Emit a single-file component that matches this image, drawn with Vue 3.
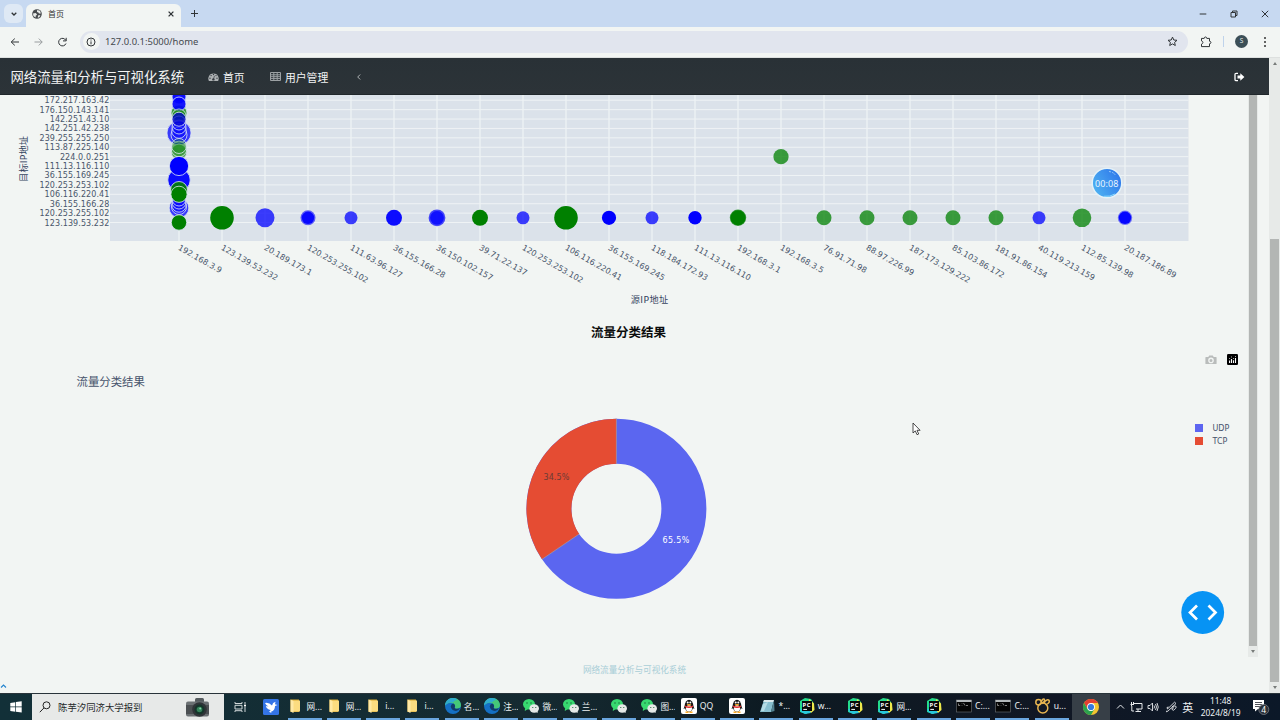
<script setup>
const yTicks = ['172.217.163.42', '176.150.143.141', '142.251.43.10', '142.251.42.238', '239.255.255.250', '113.87.225.140', '224.0.0.251', '111.13.116.110', '36.155.169.245', '120.253.253.102', '106.116.220.41', '36.155.166.28', '120.253.255.102', '123.139.53.232']
const xTicks = ['192.168.3.9', '123.139.53.232', '20.189.173.1', '120.253.255.102', '111.63.96.127', '36.155.166.28', '36.150.102.157', '39.71.22.137', '120.253.253.102', '106.116.220.41', '36.155.169.245', '118.184.172.93', '111.13.116.110', '192.168.3.1', '192.168.3.5', '76.91.71.98', '88.97.226.99', '187.173.129.222', '85.103.86.172', '181.91.86.154', '40.119.213.159', '112.85.139.98', '20.187.186.89']
const tx = (i) => 179 + i * 43
const ty = (i) => 5.2 + i * 9.41
// advance width of an address in an 8px tick label
const len = (s) => [...s].reduce((n, c) => n + (c === '.' ? 2.9 : 5.09), 0)
const B = 'blue'
const G = 'green'
// bubbles of the first source: y, radius, colour, opacity
const stack = [
  [18, 8, G, 0.72], [-1, 7.5, B, 0.75], [2, 7, B, 0.8], [9, 7, B, 0.9], [21, 7, G, 0.5],
  [38, 12, B, 0.75], [40, 8, B, 0.3], [36, 7.3, B, 0.4], [32, 7, B, 0.3], [28, 7, B, 0.3], [24.2, 7, '#0000d0', 0.75],
  [57, 7.8, G, 0.6], [54, 7.8, G, 0.3], [51, 7.5, G, 0.3],
  [85, 11.2, B, 0.95], [71, 9.6, B, 1], [113, 9.8, B, 0.75],
  [112, 7.5, B, 0.3], [110, 7.2, B, 0.3], [107, 7, B, 0.3], [104, 7, B, 0.3], [95, 8.5, G, 0.9], [99.3, 8.1, G, 1], [127.5, 7.7, G, 1]
]
// bubbles of the lower row: source index, radius, colour, opacity
const row = [
  [1, 11.8, G, 1], [2, 9.5, B, 0.75], [3, 7.5, B, 0.6], [3, 6.2, B, 0.9], [4, 6.5, B, 0.75], [5, 8, B, 0.95],
  [6, 8.4, B, 0.7], [6, 6.9, B, 0.75], [7, 8, G, 1], [8, 6.5, B, 0.75], [9, 11.8, G, 1], [10, 7.1, B, 1],
  [11, 6.5, B, 0.75], [12, 6.7, B, 1], [13, 8.2, G, 0.75], [13, 7.5, G, 1], [15, 7.5, G, 0.75], [16, 7.5, G, 0.75],
  [17, 7.5, G, 0.75], [18, 7.5, G, 0.75], [19, 7.5, G, 0.75], [20, 6.5, B, 0.75], [21, 9.3, G, 0.75], [22, 7.2, B, 0.5], [22, 6.2, B, 0.95]
]
const tasks = [
  ['folder', '网...'], ['folder', '网...'], ['folder', 'i...'], ['folder', 'i...'], ['edge', '名...'], ['edge', '注...'],
  ['wechat', '微...'], ['wechat', '兰...'], ['wechat', ''], ['wechat', '图...'], ['qq', 'QQ'], ['qq', ''], ['note', '*...'],
  ['pc', 'w...'], ['pc', ''], ['pc', '网...'], ['pc', ''], ['cmd', 'C:...'], ['cmd', 'C:...'], ['navicat', 'u...']
]
</script>

<template>
  <div class="screen">
    <header class="tabs">
      <div class="drop"><svg width="8" height="8" viewBox="0 0 8 8"><path d="M1.7 2.8 4 5l2.3-2.2" class="ink bold" /></svg></div>
      <div class="tab">
        <svg width="10" height="10" viewBox="0 0 10 10"><circle cx="5" cy="5" r="4.8" fill="#474a4d" /><path d="M1 4.4 3.6 3.9 5 5.2 4.6 6.3 3.8 6.5 3.6 8.6 1.4 7ZM5.1 1 8 1.8 8.9 4.5 7 4.6 6.4 3.5 5 3.1ZM6 6.5 8.4 6 7.4 8.2 5.8 8.8Z" fill="#e9ecea" /></svg>
        <span>首页</span>
        <svg class="close" width="8" height="8" viewBox="0 0 8 8"><path d="M1.6 1.6 6.4 6.4M6.4 1.6 1.6 6.4" class="ink bold" /></svg>
      </div>
      <svg class="plus" width="9" height="9" viewBox="0 0 9 9"><path d="M4.5 1v7M1 4.5h7" class="ink" /></svg>
      <div class="win">
        <svg width="8" height="8" viewBox="0 0 8 8"><path d="M.7 4h6.6" class="ink" /></svg>
        <svg width="8" height="8" viewBox="0 0 8 8"><path d="M1 2.5h4.5V7H1ZM2.5 2.5V1H7v4.5H5.5" class="ink" /></svg>
        <svg width="8" height="8" viewBox="0 0 8 8"><path d="M.8.8 7.2 7.2M7.2.8.8 7.2" class="ink" /></svg>
      </div>
    </header>
    <div class="toolbar">
      <svg class="nav" width="62" height="12" viewBox="0 0 62 12">
        <path d="M10 6H2.4M5.800 2.6 2.200 6 5.800 9.4" class="ink" />
        <path d="M25.500 6h7.700M29.800 2.6 33.200 6 29.800 9.4" class="ink off" />
        <path d="M56.800 4.300A3.800 3.800 0 1 0 57 7.500M57.200 1.800V4.900H54" class="ink" />
      </svg>
      <div class="url">
        <div class="info"><svg width="10" height="10" viewBox="0 0 10 10"><circle cx="5" cy="5" r="4" class="ink" /><path d="M5 4.400V7.300M5 2.500V3.500" class="ink" /></svg></div>
        <span>127.0.0.1:5000/home</span>
        <svg class="star" width="11" height="11" viewBox="0 0 11 11"><path d="M5.500 1.100 6.800 4 10 4.300 7.600 6.400 8.300 9.500 5.500 7.900 2.700 9.500 3.400 6.400 1 4.300 4.200 4Z" class="ink" /></svg>
      </div>
      <svg class="ext" width="12" height="12" viewBox="0 0 12 12"><path d="M1.500 2.400H4.200C4.200.5 6.800.5 6.800 2.400H9.500V5.200C11.400 5.200 11.400 7.800 9.500 7.800V10.600H1.500V8.100C3.400 7.600 3.400 5.300 1.500 4.900Z" class="ink" /></svg>
      <i class="sep"></i>
      <div class="avatar">S</div>
      <div class="dots"><i></i><i></i><i></i></div>
    </div>

    <div class="body">
      <div class="page">
        <nav class="navbar">
          <div class="brand">网络流量和分析与可视化系统</div>
          <div class="link home">
            <svg width="11" height="10" viewBox="0 0 11 10"><path d="M.9 9A5.200 5.200 0 1 1 10.100 9Z" fill="#adb1b3" /><g fill="#343a40"><circle cx="2" cy="6.200" r=".7" /><circle cx="3.100" cy="3.600" r=".7" /><circle cx="5.500" cy="2.500" r=".7" /><circle cx="8" cy="3.600" r=".7" /><circle cx="9" cy="6.200" r=".7" /><circle cx="5.400" cy="7.400" r="1.200" /></g><path d="M5.500 7 6.500 3.800" stroke="#343a40" stroke-width=".7" /></svg>
            首页
          </div>
          <div class="link users">
            <svg width="11" height="9" viewBox="0 0 11 9"><path d="M.5.500h10v8H.5ZM.5 2.800h10M.5 4.700h10M.5 6.600h10M3.800.5v8M7.200.5v8" fill="none" stroke="#9ca1a4" /></svg>
            用户管理
          </div>
          <svg class="angle" width="6" height="8" viewBox="0 0 6 8"><path d="M4.200 1.500 1.700 4l2.500 2.500" fill="none" stroke="#aeb2b4" /></svg>
          <svg class="exit" width="11" height="10" viewBox="0 0 11 10"><path d="M4 1.300H2.200Q1 1.300 1 2.500V7.500Q1 8.700 2.200 8.700H4" fill="none" stroke="#fff" stroke-width="1.300" /><path d="M3.500 3.500H6.300V1.200L10.400 5 6.300 8.800V6.500H3.500Z" fill="#fff" /></svg>
        </nav>
        <div class="scroll">
          <main>
            <svg class="scatter" width="1248" height="217" viewBox="0 0 1248 217">
              <rect x="110" y="0" width="1078.500" height="146" fill="#dbe2ea" />
              <g stroke="#eff3f5" stroke-width="1">
                <line v-for="(t, i) in yTicks" :key="t" x1="110" x2="1188.500" :y1="ty(i)" :y2="ty(i)" />
                <line v-for="(t, i) in xTicks" :key="t" y1="0" y2="146" :x1="tx(i)" :x2="tx(i)" stroke-width="1.300" />
              </g>
              <g stroke="#dce6f2" stroke-width=".8">
                <circle v-for="(c, i) in stack" :key="i" cx="179" :cy="c[0]" :r="c[1]" :fill="c[2]" :fill-opacity="c[3]" />
              </g>
              <circle v-for="(c, i) in row" :key="i" :cx="tx(c[0])" cy="122.800" :r="c[1]" :fill="c[2]" :fill-opacity="c[3]" />
              <circle cx="781" cy="61.700" r="7.600" fill="green" fill-opacity=".75" />
              <g class="tick">
                <text v-for="(t, i) in yTicks" :key="t" :x="109.300 - len(t)" :y="ty(i) + 3" :textLength="len(t)">{{ t }}</text>
                <text v-for="(t, i) in xTicks" :key="t" :transform="`translate(${tx(i) - 1.5} 154.3) rotate(29.6)`" :textLength="len(t) * 0.985">{{ t }}</text>
              </g>
              <text class="axis" x="649.500" y="207.500" text-anchor="middle" textLength="37.500">源IP地址</text>
              <text class="axis" transform="translate(27 64) rotate(-90)" text-anchor="middle" textLength="46">目标IP地址</text>
            </svg>
            <h4>流量分类结果</h4>
            <section class="pie">
              <div class="pie-title">流量分类结果</div>
              <svg class="donut" width="182" height="182" viewBox="-91.400 -90.700 182 182">
                <circle r="67.500" fill="none" stroke="#5b66f0" stroke-width="45" />
                <path d="M0-90A90 90 0 0 0-74.400 50.600L-37.200 25.300A45 45 0 0 1 0-45Z" fill="#e54c33" />
                <path d="M0-90V-45M-74.400 50.600-37.200 25.300" stroke="#a29aa8" stroke-width=".7" />
                <text x="-73" y="-29" fill="#6b3b35" textLength="26">34.5%</text>
                <text x="46" y="34.500" fill="#fff" textLength="27">65.5%</text>
              </svg>
              <aside>
                <div class="modebar">
                  <svg width="12" height="10" viewBox="0 0 12 10"><path fill-rule="evenodd" d="M1 2H3.300L4.200.6H7.800L8.700 2H11Q11.600 2 11.600 2.600V8.500Q11.600 9.100 11 9.100H1Q.4 9.100.4 8.500V2.600Q.4 2 1 2ZM6 2.600A2.800 2.800 0 1 0 6 8.200 2.800 2.800 0 1 0 6 2.600ZM6 3.900A1.500 1.500 0 1 1 6 6.900 1.500 1.500 0 1 1 6 3.900Z" fill="#b9bcbb" /></svg>
                  <svg width="11" height="11" viewBox="0 0 11 11"><rect width="11" height="11" rx="1.300" /><path d="M2.600 9V6.500M4.500 9V5M6.500 9V6.300M8.500 9V4" stroke="#fff" stroke-width="1.100" /><path d="M2.600 5V4M4.500 3.500v-1M6.500 5V4M8.500 3V2" stroke="#bbb" stroke-width=".9" /></svg>
                </div>
                <div class="key"><i class="udp"></i><span>UDP</span></div>
                <div class="key"><i class="tcp"></i><span>TCP</span></div>
              </aside>
            </section>
          </main>
          <div class="bar inner"><i></i><b></b></div>
        </div>
        <footer>网络流量分析与可视化系统</footer>
      </div>
      <div class="bar outer"><b class="up"></b><i></i><b></b></div>
    </div>

    <div class="taskbar">
      <div class="start"><svg width="12" height="12" viewBox="0 0 12 12"><path d="M.3 1.900 5.300 1.200V5.600H.3ZM6 1.100 11.700.3V5.600H6ZM.3 6.300H5.300V10.700L.3 10ZM6 6.300H11.700V11.600L6 10.800Z" fill="#fff" /></svg></div>
      <div class="search">
        <svg width="12" height="12" viewBox="0 0 12 12"><circle cx="7.500" cy="4.300" r="3.500" fill="none" stroke="#222" /><path d="M5 6.900.8 11.200" stroke="#222" /></svg>
        <span>陈芋汐同济大学报到</span>
        <svg class="photo" width="25" height="21" viewBox="0 0 25 21"><rect x="10" y="1" width="9" height="5" rx="1.500" fill="#555b5e" /><rect x="1" y="4.500" width="23" height="15" rx="2" fill="#6b7073" /><path d="M1 8H24V17H1Z" fill="#4b4f52" /><circle cx="14.500" cy="12.500" r="7.300" fill="#303438" /><circle cx="14.500" cy="12.500" r="5" fill="#15362b" /><circle cx="14.500" cy="12.500" r="2.800" fill="#35825a" /><circle cx="15.200" cy="11.600" r="1" fill="#82d5a4" /></svg>
      </div>
      <div class="view"><svg width="13" height="12" viewBox="0 0 13 12"><path d="M1 1v1.500H8V1M1 4.300H8V8H1ZM1 11V9.700H8V11M11 1v2.500M11 5.300V11" fill="none" stroke="#cfd7d8" stroke-width="1" /><path d="M10 4.400h2" stroke="#fff" stroke-width="1.500" /></svg></div>
      <div class="bird"><svg width="16" height="16" viewBox="0 0 16 16"><rect width="16" height="16" rx="1.500" fill="#3474e6" /><path d="M2 4Q6 3.200 9 6.500Q9.500 3.500 12.500 2.700L12 5.200 14.500 6 12 7Q12 11.500 8 12.700L8.500 14 6 12.700Q7.200 12 7.600 11Q3.500 10 2.900 7L5.500 7.500Q2.800 6 2 4Z" fill="#fff" /></svg></div>
      <div v-for="(t, i) in tasks" :key="i" class="task" :class="{ solo: !t[1] }">
        <svg v-if="t[0] === 'folder'" class="ic" viewBox="0 0 16 16"><path d="M2.500 1.500H11V14H2.500Z" fill="#d9a82f" /><path d="M4 2.500H12V13.500H4Z" fill="#fbdc80" /><path d="M2.500 1.500 5.500 3V15L2.500 13.500Z" fill="#ffe9a5" /></svg>
        <svg v-else-if="t[0] === 'edge'" class="ic" viewBox="0 0 16 16"><circle cx="8" cy="8" r="8" fill="#1470c5" /><path d="M.1 7.500C.5 2.500 4 0 8.200 0 13 0 16 3.500 16 7 16 10 13.500 11 10.500 10.600 9 10.300 10.600 9.400 10 7.600 9 4.200 3 3.700.1 7.500Z" fill="#45c878" /><path d="M.1 7.500C.5 2.500 4 0 8.200 0Q11 .2 12.500 2 9.500 1.700 8 4.500 3.500 3.700.1 7.500Z" fill="#2fabd0" /><path d="M5.700 8.500Q6 5.900 8.300 5.500 10.500 6.500 10 8.500 9 10.400 11 10.700 13.500 11 15 10 13.600 13 11 13 6.500 12.500 5.700 8.500Z" fill="#123b68" /></svg>
        <svg v-else-if="t[0] === 'wechat'" class="ic" viewBox="0 0 16 16"><ellipse cx="6" cy="6.200" rx="6" ry="5.200" fill="#38d970" /><path d="M2 10 1.800 13 5 11Z" fill="#38d970" /><ellipse cx="11.200" cy="10.500" rx="4.800" ry="4.200" fill="#e5e9e7" /><path d="m12 13.500 2.700 1.500-.5-3Z" fill="#e5e9e7" /><g fill="#185c35"><circle cx="4" cy="5" r=".7" /><circle cx="8" cy="5" r=".7" /><circle cx="9.800" cy="9.500" r=".6" /><circle cx="12.800" cy="9.500" r=".6" /></g></svg>
        <svg v-else-if="t[0] === 'qq'" class="ic" viewBox="0 0 16 16"><rect width="16" height="16" rx="2" fill="#fff" /><ellipse cx="8" cy="8" rx="4.200" ry="6.200" fill="#151515" /><path d="M4 7 2.500 11 4.500 10ZM12 7 13.500 11 11.500 10Z" fill="#151515" /><ellipse cx="8" cy="10.500" rx="3" ry="3.300" fill="#fff" /><path d="M4 7.400Q8 9.500 12 7.400L12 9Q8 11 4 9Z" fill="#e52c2c" /><circle cx="6.700" cy="4.600" r="1" fill="#fff" /><circle cx="9.300" cy="4.600" r="1" fill="#fff" /><ellipse cx="8" cy="6.700" rx="2.300" ry=".7" fill="#ffac25" /><path d="M4.500 13.500H7.500V15H4.500ZM8.500 13.500H11.500V15H8.500Z" fill="#ffac25" /></svg>
        <svg v-else-if="t[0] === 'note'" class="ic" viewBox="0 0 16 16"><path d="M5 2H15L12 14H1Z" fill="#88bfcf" /><path d="M5 2H15L14.500 4H4.200Z" fill="#dbe9ec" /><path d="m15 2 .5 11-3.500 1Z" fill="#538393" /><path d="M4 6 9 4 5 13H2Z" fill="#b6dce5" /></svg>
        <svg v-else-if="t[0] === 'pc'" class="ic" viewBox="0 0 16 16"><path d="M1 3 6 0 12 1 14.500 5 13 12 7 16 1 14Z" fill="#24dc8c" /><path d="M10 1 15 5.500 15.500 12 12 15 9 12Z" fill="#efe94b" /><path d="m1 11 8-1 3 5-6 1-4-2Z" fill="#29c8dc" /><rect x="3" y="3" width="10" height="10" fill="#080808" /><text x="3.500" y="8.600" font-size="5.800" font-weight="700" fill="#fff" textLength="8">PC</text><path d="M4.300 11.400H8" stroke="#fff" /></svg>
        <svg v-else-if="t[0] === 'cmd'" class="ic" viewBox="0 0 16 16"><rect x=".5" y="2" width="15" height="12" fill="#050505" stroke="#6d7275" stroke-width=".6" /><path d="M.5 2H15.500V4H.5Z" fill="#b4b9bb" /><path d="M2.500 5.500v2h1.700M6 5.500v.5M6 7v.5M7.500 5 9 7.500M10 7.500h2" stroke="#ccc" stroke-width=".6" fill="none" /></svg>
        <svg v-else class="ic" viewBox="0 0 16 16"><g fill="none" stroke="#e7b551" stroke-width="1.500"><circle cx="7.800" cy="10" r="5" /><circle cx="3.500" cy="4.300" r="2.700" /><path d="M6.500 5.200C6 1 9 .5 9.500 1.500S8.500 5 7 5.500M9 5.500C10 1.500 14 1 14.300 3S12 6.500 10.500 6.500" /></g></svg>
        <span v-if="t[1]">{{ t[1] }}</span>
      </div>
      <div class="chrome"><svg width="16" height="16" viewBox="-8 -8 16 16"><circle r="8" fill="#f4c430" /><path d="M0-4H6.930A8 8 0 0 0-6.930-4L-3.460 2Z" fill="#e23f33" /><path d="M-6.930-4A8 8 0 0 0 0 8L3.460 2H-3.460Z" fill="#2ca24e" /><circle r="3.900" fill="#fff" /><circle r="3.100" fill="#3579df" /></svg></div>
      <div class="tray">
        <svg width="84" height="14" viewBox="0 0 84 14" fill="none" stroke="#e6e9ec">
          <path d="M1 8.500 4.500 5 8 8.500" />
          <path d="M18 3.500H26V9H20M22 9V11.500M19.500 11.500H25M15.500 2V6M17.500 2V4M14.500 4.500H18M15.800 6V11H18" />
          <path d="M32 5.500H34L36.500 3V11L34 8.500H32ZM38 5.500Q39 7 38 8.500M39.500 4Q41.500 7 39.500 10M41 3Q43.500 7 41 11" stroke-width=".9" />
          <path d="M51 10.500Q49.500 12.500 51.500 11.500L60 3.500 58.500 2.200 51.500 9Q50 7 52.500 7M56 6.500Q62 5 59.500 8.500 57.500 11.500 56 9.500 55 7.500 58 7.800" stroke-width=".9" />
        </svg>
        <span class="ime">英</span>
      </div>
      <div class="clock"><span>11:48</span><span>2024/8/19</span></div>
      <div class="notice"><svg width="18" height="18" viewBox="0 0 18 18"><path d="M1 2H12V11H6L3 13.500V11H1Z" fill="#fff" /><path d="M3 4.500H10M3 6.500H10M3 8.500H8" stroke="#22262e" stroke-width=".8" /><circle cx="11.800" cy="11.500" r="5" fill="#2b3038" stroke="#888d94" stroke-width=".7" /><text x="9.200" y="14.700" font-size="8.500" fill="#fff">4</text></svg></div>
    </div>

    <div class="timer">
      <svg width="32" height="32" viewBox="0 0 32 32">
        <defs><linearGradient id="tg" x1="0" y1=".8" x2="1" y2=".2"><stop stop-color="#50b4f2" /><stop offset="1" stop-color="#2d75ea" /></linearGradient></defs>
        <circle cx="16" cy="16" r="14.800" fill="url(#tg)" stroke="#e5f2f8" stroke-width="1.500" />
        <path d="M18 4.500Q22 5 24.500 8" fill="none" stroke="#93c9fb" stroke-dasharray="2 1" /><path d="M13 29.300Q19 30 24 27" fill="none" stroke="#8ddcff" />
        <text x="4" y="19.500" font-size="9" fill="#e8f6ff" textLength="23.500">00:08</text>
      </svg>
    </div>
    <div class="fab"><svg width="44" height="44" viewBox="0 0 44 44"><circle cx="21.700" cy="21.500" r="21.400" fill="#0793f4" /><path d="M16 14.500 9 21.500 16 28.500M27.500 14.500 34.500 21.500 27.500 28.500" fill="none" stroke="#fff" stroke-width="2.700" /></svg></div>
    <svg class="cursor" width="9" height="14" viewBox="0 0 9 14"><path d="M1 1V11L3.300 8.900 5 12.700 6.700 12 5 8.300H8.100Z" fill="#fff" stroke="#222" stroke-width=".8" /></svg>
    <svg class="caret" width="7" height="6" viewBox="0 0 7 6"><path d="M1 4.500 3.500 2 6 4.500" fill="none" stroke="#2484cf" stroke-width="1.100" /></svg>
  </div>
</template>

<style>
body { background: #f2f5f3; overflow: hidden; }
</style>

<style scoped>
* { box-sizing: border-box; }
svg { display: block; flex: none; }
.screen { position: relative; width: 1280px; height: 720px; display: flex; flex-direction: column; background: #f2f5f3; font-family: "Noto Sans", "Noto Sans CJK SC", sans-serif; overflow: hidden; white-space: nowrap; }
.ink { fill: none; stroke: #303437; stroke-width: 1; }
.bold { stroke-width: 1.3; }
.off { stroke: #999d9f; }
.tabs { height: 27px; flex: none; display: flex; align-items: center; background: #c7d9f1; }
.drop { width: 19px; height: 19px; margin-left: 4px; border-radius: 6px; background: #dfe9f5; display: grid; place-items: center; }
.tab { position: relative; align-self: flex-end; width: 155px; height: 23px; margin-left: 3px; padding: 0 6px 4px 6px; border-radius: 6px 6px 0 0; background: #f2f5f3; display: flex; align-items: center; font-size: 8px; color: #333; }
.tab span { margin-left: 6px; }
.close { margin-left: auto; }
.plus { margin-left: 9px; }
.win { margin-left: auto; display: flex; gap: 23px; margin-right: 11px; }
.toolbar { height: 31px; flex: none; display: flex; align-items: center; background: #f2f5f3; padding-bottom: 1px; border-bottom: 1px solid #dde0df; }
.nav { margin-left: 9px; }
.url { margin-left: 9px; width: 1108px; height: 22px; border-radius: 11px; background: #e1e5ee; display: flex; align-items: center; padding: 0 10px 0 2.500px; font-size: 9.45px; color: #45494e; }
.info { width: 17px; height: 17px; border-radius: 50%; background: #f2f5f3; display: grid; place-items: center; margin-right: 5.500px; }
.star { margin-left: auto; }
.ext { margin-left: 12px; }
.sep { width: 1px; height: 11px; background: #bfd3eb; margin-left: 11px; }
.avatar { margin-left: 11px; width: 13px; height: 13px; border-radius: 50%; background: #3c4f57; color: #e5ebed; display: grid; place-items: center; font-size: 6.5px; line-height: 1; }
.dots { margin-left: 16px; display: grid; gap: 2px; }
.dots i { width: 2px; height: 2px; border-radius: 50%; background: #333; }
.body { flex: 1; min-height: 0; display: flex; }
.page { width: 1269px; display: flex; flex-direction: column; }
.navbar { height: 37px; flex: none; background: linear-gradient(#293136, #2c3338); border-bottom: 1px solid #20272b; color: #f3f4f4; display: flex; align-items: center; padding: 1px 24px 0 10.500px; }
.brand { font-size: 13.350px; width: 197.500px; line-height: 20px; }
.link { display: flex; align-items: center; gap: 4px; font-size: 10.8px; }
.home { width: 62px; }
.users { width: 86px; }
.exit { margin-left: auto; }
.scroll { height: 562px; flex: none; display: flex; }
main { width: 1248px; flex: none; }
.tick { font-family: "DejaVu Sans", sans-serif; font-size: 8px; fill: #49566b; }
.axis { font-family: "DejaVu Sans", "Noto Sans CJK SC", sans-serif; font-size: 9.2px; fill: #35445f; }
h4 { margin: 0; padding-top: 11.500px; height: 38px; padding-left: 9px; text-align: center; font-size: 12.5px; line-height: 18px; font-weight: 700; color: #0b0c0c; }
.pie { height: 307px; display: flex; }
.pie-title { width: 448.500px; padding: 22.500px 0 0 76.500px; font-size: 11.4px; line-height: 17px; color: #46536b; flex: none; }
.donut { margin: 68px 0 0 76px; }
.donut text { font-family: "DejaVu Sans", sans-serif; font-size: 8px; }
aside { margin-left: auto; width: 53px; font: 8px/12.700px "DejaVu Sans", sans-serif; color: #46536b; }
.modebar { display: flex; align-items: center; gap: 10px; padding: 0 0 0 10px; height: 19px; margin-bottom: 53px; }
.key { display: flex; align-items: center; gap: 9.500px; }
.key i { width: 8px; height: 8px; }
.key span { padding-top: 1px; margin-bottom: -1px; }
.udp { background: #5d65f0; }
.tcp { background: #e54c33; }
.bar { display: flex; flex-direction: column; flex: none; background: #e7eae8; }
.inner { width: 10px; }
.bar i { flex: 1; background: #b3b6b4; margin: 0 1px; }
.bar b { height: 11px; display: grid; place-items: center; }
.bar b::after { content: ""; border: 2.5px solid transparent; border-top: 3px solid #777b79; border-bottom: 0; }
.outer { width: 11px; }
.outer i { margin-top: 170px; }
.outer .up::after { transform: rotate(180deg); }
footer { text-align: center; font-size: 8.6px; line-height: 14px; padding-top: 6px; color: #a9ced7; }
.taskbar { height: 27px; flex: none; display: flex; align-items: stretch; color: #eef2f4; background: linear-gradient(90deg, #123038, #152a31 42%, #0d1a22 60%, #111724 82%, #0b1828); border-top: 1px solid #29343a; font-size: 8.600px; }
.taskbar > div { display: flex; align-items: center; }
.start { width: 32px; justify-content: center; }
.search { width: 192px; background: #e7e9e8; color: #252829; padding-left: 7px; }
.search span { margin-left: 7px; font-size: 9.400px; }
.photo { margin-left: auto; margin-right: 14px; }
.view { width: 32px; justify-content: center; }
.bird { width: 31.500px; padding-left: 7px; }
.task { width: 34px; margin-right: 5.330px; border-bottom: 2px solid #6aa6df; gap: 3px; flex: none; overflow: hidden; }
.solo { justify-content: center; }
.ic { width: 16px; height: 16px; }
.chrome { width: 38.600px; margin-left: -2.500px; justify-content: center; background: #373f47; }
.tray { width: 84.500px; padding-left: 6px; }
.ime { margin-left: -18px; font-size: 11px; }
.clock { width: 52px; flex-direction: column; justify-content: center; font-size: 8.400px; line-height: 12.500px; }
.notice { padding-left: 5px; }
.timer { position: absolute; left: 1091px; top: 167px; }
.fab { position: absolute; left: 1181px; top: 591px; }
.cursor { position: absolute; left: 912px; top: 422px; }
.caret { position: absolute; left: 0; top: 683px; }
</style>
